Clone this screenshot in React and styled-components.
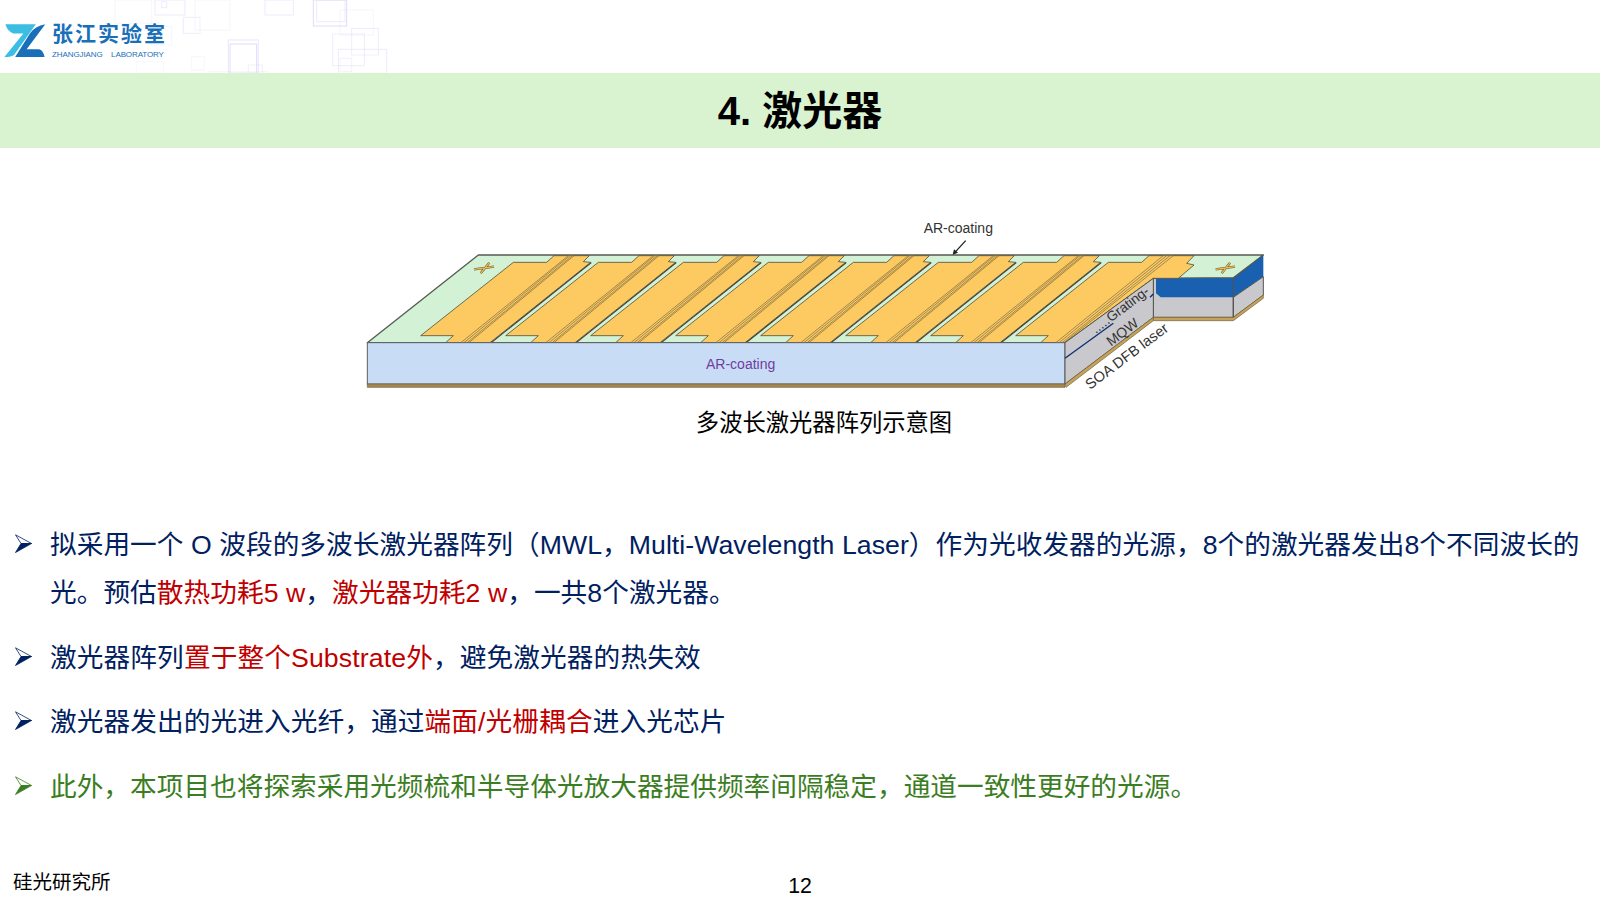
import React from "react";
import styled, { createGlobalStyle } from "styled-components";

const Global = createGlobalStyle`
  html, body { margin: 0; padding: 0; background: #fff; }
  body { font-family: "Liberation Sans", "Noto Sans CJK SC", sans-serif; }
`;
const Page = styled.div`
  width: 1600px; height: 900px; overflow: hidden; display: flex; flex-direction: column; background: #fff;
`;
const Header = styled.header`
  position: relative; height: 73px; flex: none; display: flex; align-items: flex-start; padding: 23px 0 0 3px; box-sizing: border-box; gap: 5px;
`;
const Squares = styled.svg`
  position: absolute; left: 0; top: 0; width: 400px; height: 73px;
`;
const LogoMark = styled.svg`
  width: 44px; height: 35px; flex: none; position: relative;
`;
const LogoText = styled.div`
  position: relative; display: flex; flex-direction: column; color: #1a6fb9;
`;
const LogoCn = styled.div`
  font-size: 21px; line-height: 24px; font-weight: 700; letter-spacing: 2px; margin-top: -1px;
`;
const LogoEn = styled.div`
  font-size: 8px; line-height: 10px; margin-top: 4px; white-space: pre; letter-spacing: -0.1px;
`;
const TitleBand = styled.div`
  height: 75px; flex: none; background: #d9f2d0; display: flex; align-items: center; justify-content: center;
`;
const Title = styled.h1`
  margin: 0; font-size: 40px; font-weight: 700; color: #000; line-height: 1;
`;
const Figure = styled.figure`
  margin: 62px 0 0 350px; width: 960px; flex: none;
`;
const Diagram = styled.svg`
  display: block; width: 920px; height: 200px;
`;
const Caption = styled.figcaption`
  width: 948px; text-align: center; font-size: 23.3px; line-height: 30px; color: #000; margin-top: -2px;
`;
const BulletList = styled.ul`
  list-style: none; margin: 83px 0 0; padding: 0 0 0 15px; display: flex; flex-direction: column; gap: 16.5px;
`;
const Bullet = styled.li`
  display: grid; grid-template-columns: 35px 1fr; font-size: 26.67px; line-height: 48px; width: 1570px;
  letter-spacing: ${p => p.$spacing}px;
  color: ${p => p.$tone === "green" ? "#3b7d23" : "#002060"};
`;
const Arrow = styled.svg`
  width: 17px; height: 19px; margin-top: 13px;
`;
const Red = styled.span`
  color: #c00000;
`;
const Footer = styled.footer`
  margin-top: auto; display: grid; grid-template-columns: 1fr auto 1fr; padding: 0 13px 4px; align-items: end; color: #000;
`;
const Org = styled.div`
  font-size: 19.5px; line-height: 28px;
`;
const PageNo = styled.div`
  font-size: 21.3px; line-height: 28px; margin-bottom: -4px;
`;

const squares = [
  [345,0,110,70,.25],[465,0,90,45,.5],[485,5,15,18,.5],[550,52,50,48,.45],[585,0,105,90,.25],[795,0,85,45,.5],
  [940,0,100,78,.9],[950,0,85,65,.5],[1020,30,100,75,.25],[998,102,95,95,.45],[1055,85,80,80,.45],[1015,148,145,72,.45],
  [1020,175,35,40,.35],[685,120,90,100,.6],[690,132,80,88,.9],[745,195,42,25,.4],[575,170,38,40,.25],[410,185,80,35,.2],[455,80,60,55,.3],[625,215,180,5,.3]
];

const pad = "212,377 310,377 287,398 420,398 722,157 700,155 718,137 612,137 590,157 490,157";

function Unit({ dx }) {
  return (
    <g transform={`translate(${dx} 0)`}>
      <polygon points={pad} fill="#fdc961" stroke="#55523f" strokeWidth="2.5" strokeLinejoin="round" />
      <path d="M421 400 L724 158" stroke="#3e3c30" strokeWidth="3.5" fill="none" />
      <path d="M330 400 Q340 408 352 402 L672 137 L655 137 Z" fill="#f7cb6c" stroke="#7d6530" strokeWidth="2" />
      <path d="M337 402 L660 137 M345 403 L667 137" stroke="#7d6530" strokeWidth="2" fill="none" />
    </g>
  );
}

function Laser() {
  const o = 1350;
  const p = (s) => s.split(" ").map(q => { const [x, y] = q.split(","); return `${+x + o},${y}`; }).join(" ");
  return (
    <Diagram viewBox="0 0 2760 600">
      <polygon points="385,135 2740,135 2650,203 2410,205 2145,398 52,398" fill="#d3f1d5" stroke="#555b50" strokeWidth="4" strokeLinejoin="round" />
      <polygon points={p("1060,205 1300,205 1300,322 1060,322")} fill="#c9c9cd" stroke="#55554f" strokeWidth="3" />
      <polygon points={p("1068,205 1300,205 1390,135 1390,200 1300,262 1082,262 1068,250")} fill="#1960b0" />
      <polygon points={p("1300,262 1390,200 1390,255 1300,322")} fill="#c9c9cd" stroke="#55554f" strokeWidth="3" />
      <polygon points={p("1060,322 1300,322 1390,255 1390,265 1300,332 1060,332")} fill="#c6a258" stroke="#6b5d3c" strokeWidth="2" />
      <path d={`M${o + 1300} 205 L${o + 1300} 322 M${o + 1300} 205 L${o + 1390} 135`} stroke="#55554f" strokeWidth="3" />
      {[0, 1, 2, 3, 4, 5, 6].map(i => <Unit key={i} dx={i * 255} />)}
      <polygon points="1997,377 2095,377 2072,398 2145,398 2410,205 2485,205 2532,165 2510,160 2532,137 2397,137 2375,157 2275,157" fill="#fdc961" stroke="#55523f" strokeWidth="2.5" strokeLinejoin="round" />
      <path d="M2115 400 Q2125 408 2137 402 L2470 137 L2440 137 Z" fill="#f7cb6c" stroke="#7d6530" strokeWidth="2" />
      <path d="M2122 402 L2450 137 M2130 403 L2460 137" stroke="#7d6530" strokeWidth="2" fill="none" />
      <rect x="52" y="398" width="2093" height="124" fill="#c9dcf6" stroke="#5a5f62" strokeWidth="3" />
      <polygon points="52,522 2145,522 2145,532 52,532" fill="#a8884c" stroke="#6b5d3c" strokeWidth="2" />
      <polygon points="2145,398 2410,205 2410,322 2145,522" fill="#c9c9cd" stroke="#55554f" strokeWidth="3" />
      <polygon points="2145,522 2410,322 2410,332 2148,532" fill="#c6a258" stroke="#6b5d3c" strokeWidth="2" />
      <path d="M2145 445 L2290 340" stroke="#0c2d78" strokeWidth="4" />
      <path d="M2400 262 L2410 252" stroke="#0c2d78" strokeWidth="4" />
      <g fill="none">
        <path d="M372 178 L432 170 M392 190 L418 158" stroke="#6e5a22" strokeWidth="7" />
        <path d="M372 178 L432 170 M392 190 L418 158" stroke="#e9bf5e" strokeWidth="4" />
        <path d="M2597 178 L2655 170 M2615 190 L2640 158" stroke="#6e5a22" strokeWidth="7" />
        <path d="M2597 178 L2655 170 M2615 190 L2640 158" stroke="#e9bf5e" strokeWidth="4" />
      </g>
      <g fontFamily="'Liberation Sans', sans-serif">
        <text x="1068" y="477" fontSize="42" fill="#6f3fa0">AR-coating</text>
        <text x="1721" y="69" fontSize="42" fill="#333">AR-coating</text>
        <g fill="#333">
          <text transform="translate(2237 372) rotate(-37)" fontSize="41">.....Grating-</text>
          <text transform="translate(2283 410) rotate(-37)" fontSize="42">MQW</text>
          <text transform="translate(2220 540) rotate(-37)" fontSize="44">SOA  DFB laser</text>
        </g>
      </g>
      <path d="M1847 92 L1812 130" stroke="#222" strokeWidth="4" />
      <polygon points="1808,134 1812,118 1824,128" fill="#222" />
    </Diagram>
  );
}

function BulletIcon({ c }) {
  return (
    <Arrow viewBox="0 0 17 19">
      <path d="M0.5 0.8 L16.5 9.5 L6 9.5 Z" fill="#fff" stroke={c} strokeWidth="0.8" />
      <path d="M16.5 9.5 L6 9.5 L0.5 18.5 Z" fill={c} stroke={c} strokeWidth="0.8" />
    </Arrow>
  );
}

export default function App() {
  return (
    <Page>
      <Global />
      <Header>
        <Squares viewBox="0 0 1200 219">
          {squares.map(([x, y, w, h, o], i) => (
            <rect key={i} x={x} y={y} width={w} height={h} fill="none" stroke="#d9d9fb" strokeWidth="3" opacity={o} />
          ))}
        </Squares>
        <LogoMark viewBox="10 68 130 107">
          <path d="M15 72 L108 72 L42 165 Q35 172 12 172 L70 100 L40 100 Q22 95 15 72Z" fill="#3cbde3" />
          <path d="M137 72 Q105 78 90 100 L45 172 L135 172 Q130 150 118 148 L80 148 Z" fill="#1a6fb9" />
        </LogoMark>
        <LogoText>
          <LogoCn>张江实验室</LogoCn>
          <LogoEn>ZHANGJIANG    LABORATORY</LogoEn>
        </LogoText>
      </Header>
      <TitleBand><Title>4. 激光器</Title></TitleBand>
      <Figure>
        <Laser />
        <Caption>多波长激光器阵列示意图</Caption>
      </Figure>
      <BulletList>
        <Bullet $spacing={0.05}>
          <BulletIcon c="#002060" />
          <span>拟采用一个 O 波段的多波长激光器阵列（MWL，Multi-Wavelength Laser）作为光收发器的光源，8个的激光器发出8个不同波长的光。预估<Red>散热功耗5 w</Red>，<Red>激光器功耗2 w</Red>，一共8个激光器。</span>
        </Bullet>
        <Bullet $spacing={0.12}>
          <BulletIcon c="#002060" />
          <span>激光器阵列<Red>置于整个Substrate外</Red>，避免激光器的热失效</span>
        </Bullet>
        <Bullet $spacing={0.1}>
          <BulletIcon c="#002060" />
          <span>激光器发出的光进入光纤，通过<Red>端面/光栅耦合</Red>进入光芯片</span>
        </Bullet>
        <Bullet $tone="green" $spacing={0.02}>
          <BulletIcon c="#3b7d23" />
          <span>此外，本项目也将探索采用光频梳和半导体光放大器提供频率间隔稳定，通道一致性更好的光源。</span>
        </Bullet>
      </BulletList>
      <Footer>
        <Org>硅光研究所</Org>
        <PageNo>12</PageNo>
      </Footer>
    </Page>
  );
}
